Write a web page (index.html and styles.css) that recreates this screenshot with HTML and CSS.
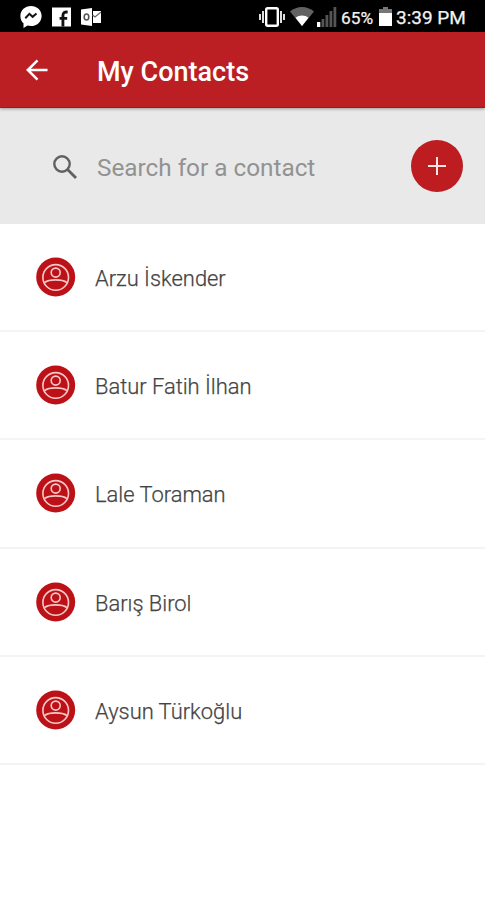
FILE: index.html
```html
<!DOCTYPE html>
<html lang="en">
<head>
<meta charset="utf-8">
<title>My Contacts</title>
<link rel="stylesheet" href="styles.css">
</head>
<body>
<svg width="0" height="0" class="defs" aria-hidden="true">
  <symbol id="person" viewBox="0 0 40 40">
    <circle cx="19.700" cy="20" r="19.500" fill="#bd1118"/>
    <g fill="none" stroke="#f4c9c8" stroke-width="1.600">
      <circle cx="19.700" cy="20.400" r="12.800"/>
      <circle cx="19.700" cy="15.600" r="4.500"/>
      <path d="M8.500 25.500C11.700 23.200 15.700 22.900 19.700 22.900s8 .3 11.200 2.600"/>
    </g>
  </symbol>
</svg>
<div class="status">
  <div class="notifications">
    <svg width="22" height="22" viewBox="0 0 22 22"><path fill="#fff" d="M11 0C5 0 .4 4.300.4 9.900c0 3.100 1.200 5.600 3.100 7.400V22l4-2.400c1.100.3 2.200.4 3.500.4 6 0 10.600-4.400 10.600-10.100S17 0 11 0z"/><path d="M5.300 12.200l4.100-4.400 3.200 3 3.900-3.300" fill="none" stroke="#111" stroke-width="2"/></svg>
    <svg width="19" height="20" viewBox="0 0 20 20"><path fill="#fff" d="M0 0h20v20H0z"/><path d="M11.500 20V8.500c0-3 1.500-4 5-3.700M8 11.500h8" fill="none" stroke="#111" stroke-width="3"/></svg>
    <svg width="20" height="18" viewBox="0 0 20 18"><path fill="#fff" d="M0 1.500L11 0v18L0 16.500zM12 3h8v12h-8z"/><ellipse cx="5.500" cy="9" rx="2.300" ry="3" fill="none" stroke="#555" stroke-width="1.600"/><path d="M11.500 7l2.500 2 6-5" fill="none" stroke="#666" stroke-width="1.300"/></svg>
  </div>
  <div class="system">
    <svg class="vibrate" width="26" height="20" viewBox="0 0 26 20"><rect x="7.200" y="1.200" width="11.600" height="17.600" rx="1.500" fill="none" stroke="#fff" stroke-width="2.400"/><path d="M4 4v12M22 4v12M1 7v6M25 7v6" stroke="#ddd" stroke-width="2"/></svg>
    <svg class="wifi" width="24" height="19" viewBox="0 0 24 19"><path fill="#626262" d="M0 4.500C7-1.500 17-1.500 24 4.500L12 19z"/><path fill="#fff" d="M5.500 10.800c4-3 9-3 13 0L12 19z"/></svg>
    <svg class="signal" width="20" height="20" viewBox="0 0 20 20"><path fill="#fff" d="M0 15h3.300v5H0z"/><path fill="#555" d="M4.500 12h2.800v8H4.500zM8.500 8h2.800v12H8.500zM12.500 4h2.800v16h-2.800zM16.500 0h2.800v20h-2.800z"/></svg>
    <span class="percent">65%</span>
    <svg class="battery" width="13" height="19" viewBox="0 0 13 19"><path fill="#777" d="M4 0h5v2h4v4H0V2h4z"/><path fill="#fff" d="M0 6h13v13H0z"/></svg>
    <span class="clock">3:39 PM</span>
  </div>
</div>
<header class="bar">
  <svg width="22" height="22" viewBox="0 0 22 22"><path d="M21.500 11H2M11.500 1.300L1.800 11l9.700 9.700" fill="none" stroke="#fff" stroke-width="2.500"/></svg>
  <h1>My Contacts</h1>
</header>
<div class="search">
  <svg width="24" height="24" viewBox="0 0 24 24"><circle cx="9" cy="9" r="7.700" fill="none" stroke="#606060" stroke-width="2.400"/><path d="M14.300 14.300l8.700 8.700" stroke="#606060" stroke-width="2.800"/></svg>
  <span class="placeholder">Search for a contact</span>
  <div class="add"><svg width="18" height="18" viewBox="0 0 18 18"><path d="M9 0v18M0 9h18" stroke="#ffe5e3" stroke-width="2"/></svg></div>
</div>
<ul class="contacts">
  <li><svg><use href="#person"/></svg><span>Arzu İskender</span></li>
  <li><svg><use href="#person"/></svg><span>Batur Fatih İlhan</span></li>
  <li><svg><use href="#person"/></svg><span>Lale Toraman</span></li>
  <li><svg><use href="#person"/></svg><span>Barış Birol</span></li>
  <li><svg><use href="#person"/></svg><span>Aysun Türkoğlu</span></li>
</ul>
</body>
</html>
```
FILE: styles.css
```css
* { box-sizing: border-box; }
body { margin: 0; height: 900px; overflow: hidden; background: #fff; font-family: Roboto, "Liberation Sans", sans-serif; }
svg { display: block; flex: none; }
.defs { position: absolute; }
.status { height: 32px; background: #000; color: #f2f2f2; display: flex; justify-content: space-between; padding: 1px 19px 0 20px; }
.notifications, .system { display: flex; align-items: center; }
.notifications { gap: 10px; }
.vibrate { margin-right: 5px; }
.wifi { margin-right: 3px; }
.signal { margin-right: 4px; }
.percent { width: 33px; font-size: 17.3px; white-space: nowrap; margin-right: 5px; }
.battery { margin-right: 4px; }
.clock { width: 70px; font-size: 19px; white-space: nowrap; }
.percent, .clock { -webkit-text-stroke: .25px #f2f2f2; padding-top: 2px; }
.bar { position: relative; height: 76px; background: #bb1f23; border-bottom: 1px solid #b40f14; display: flex; align-items: center; padding-left: 26px; gap: 49px; box-shadow: 0 1px 3px rgba(0, 0, 0, .35); }
.bar svg { margin-top: 1px; }
h1 { margin: 4px 0 0; color: #fff; font-size: 27px; line-height: 32px; font-weight: 500; }
.search { height: 116px; background: #e9e9e9; display: flex; align-items: center; padding: 2px 22px 0 53px; }
.placeholder { margin: 0 0 0 20px; color: #929292; font-size: 24.3px; }
.add { width: 52px; height: 52px; margin: -2px 0 0 auto; border-radius: 50%; background: #bd1c20; display: flex; align-items: center; justify-content: center; }
.contacts { margin: 0; padding: 0; list-style: none; }
.contacts li { height: 108.2px; border-bottom: 2px solid #f4f4f4; display: flex; align-items: center; padding-left: 36px; gap: 19px; }
.contacts svg { width: 40px; height: 40px; }
.contacts span { color: #444; font-size: 21.9px; line-height: 28px; margin-top: 4px; font-weight: 300; -webkit-text-stroke: .25px #444; }
```
